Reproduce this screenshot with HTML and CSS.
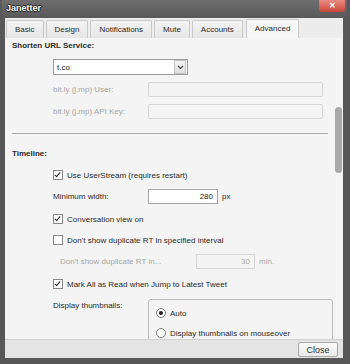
FILE: index.html
```html
<!DOCTYPE html>
<html lang="en">
<head>
    <meta charset="UTF-8">
    <title>Janetter - Settings</title>
    <link rel="stylesheet" href="styles.css">
</head>
<body>
    <div class="window">
        <div class="titlebar">
            <span class="title">Janetter</span>
            <span class="close-x">&#x2715;</span>
        </div>

        <div class="tabs">
            <div class="tab">Basic</div>
            <div class="tab">Design</div>
            <div class="tab">Notifications</div>
            <div class="tab">Mute</div>
            <div class="tab">Accounts</div>
            <div class="tab active">Advanced</div>
        </div>

        <div class="panel">
            <div class="content">
                <div class="section-title">Shorten URL Service:</div>

                <div class="row select-row">
                    <div class="select">
                        <span class="select-value">t.co</span>
                        <span class="select-arrow">
                            <svg width="7" height="5" viewBox="0 0 7 5"><path d="M1 1 L3.5 3.5 L6 1" fill="none" stroke="#444" stroke-width="1.2"/></svg>
                        </span>
                    </div>
                </div>

                <div class="row field-row">
                    <label class="label disabled">bit.ly (j.mp) User:</label>
                    <div class="input wide disabled"></div>
                </div>

                <div class="row field-row">
                    <label class="label disabled">bit.ly (j.mp) API Key:</label>
                    <div class="input wide disabled"></div>
                </div>

                <hr class="divider">

                <div class="section-title timeline">Timeline:</div>

                <div class="row check-row">
                    <span class="checkbox checked"></span>
                    <span>Use UserStream (requires restart)</span>
                </div>

                <div class="row field-row width-row">
                    <label class="label">Minimum width:</label>
                    <div class="input number">280</div>
                    <span class="unit">px</span>
                </div>

                <div class="row check-row gap-7">
                    <span class="checkbox checked"></span>
                    <span>Conversation view on</span>
                </div>

                <div class="row check-row">
                    <span class="checkbox"></span>
                    <span>Don't show duplicate RT in specified interval</span>
                </div>

                <div class="row field-row dup-row">
                    <label class="label disabled dup-label">Don't show duplicate RT in...</label>
                    <div class="input small disabled">30</div>
                    <span class="unit disabled">min.</span>
                </div>

                <div class="row check-row gap-7">
                    <span class="checkbox checked"></span>
                    <span>Mark All as Read when Jump to Latest Tweet</span>
                </div>

                <div class="thumb-row">
                    <label class="label">Display thumbnails:</label>
                    <div class="group">
                        <div class="radio-row">
                            <span class="radio selected"></span>
                            <span>Auto</span>
                        </div>
                        <div class="radio-row">
                            <span class="radio"></span>
                            <span>Display thumbnails on mouseover</span>
                        </div>
                    </div>
                </div>
            </div>
            <div class="scroll-thumb"></div>
        </div>

        <div class="footer">
            <button class="close-button">Close</button>
        </div>
    </div>
</body>
</html>
```

FILE: styles.css
```css
body {
    margin: 0;
    font-family: 'Liberation Sans', Arial, sans-serif;
    font-size: 8px;
    color: #2a2a2a;
}
.window {
    width: 350px;
    height: 364px;
    box-sizing: border-box;
    padding: 0 7px 6px 5px;
    background: #585858;
    display: flex;
    flex-direction: column;
    overflow: hidden;
}
.titlebar {
    height: 18px;
    flex: none;
    display: flex;
    justify-content: space-between;
    align-items: flex-start;
    margin: 0 -4px 0 -3px;
    background: linear-gradient(#6e6e6e, #595959);
}
.title {
    margin: 3px 0 0 4px;
    color: #fff;
    font-size: 9px;
    font-weight: bold;
    text-shadow: 1px 0 0 #222, -1px 0 0 #222, 0 1px 0 #222, 0 -1px 0 #222;
}
.close-x {
    width: 26px;
    height: 12px;
    margin-right: 2px;
    border-radius: 0 0 3px 3px;
    background: linear-gradient(#e98a80, #c9473b);
    color: #fff;
    font-size: 8px;
    font-weight: bold;
    text-align: center;
    line-height: 12px;
}
.tabs {
    height: 20px;
    flex: none;
    display: flex;
    align-items: flex-end;
    gap: 2px;
    padding-left: 1px;
    background: #ececec;
}
.tab {
    height: 17px;
    line-height: 17px;
    padding: 0 8px;
    border: 1px solid #c9c9c9;
    border-bottom: none;
    border-radius: 2px 2px 0 0;
    background: linear-gradient(#f3f3f3, #e6e6e6);
}
.tab.active {
    height: 18px;
    background: #f6f6f6;
    margin-left: 1px;
}
.panel {
    flex: 1;
    position: relative;
    background: #f4f4f4;
    overflow: hidden;
}
.content {
    padding-left: 7px;
}
.section-title {
    font-weight: bold;
    height: 16px;
    line-height: 16px;
}
.row {
    display: flex;
    align-items: center;
    height: 16px;
    margin-left: 41px;
    margin-top: 5px;
}
.select-row {
    margin-top: 5px;
}
.field-row {
    margin-top: 6px;
}
.gap-7 {
    margin-top: 7px;
}
.label {
    width: 95px;
    flex: none;
}
.disabled {
    color: #a6a6a6;
}
.select {
    width: 133px;
    height: 14px;
    display: flex;
    align-items: center;
    justify-content: space-between;
    border: 1px solid #9a9a9a;
    background: #fff;
}
.select-value {
    padding-left: 3px;
    color: #222;
}
.select-arrow {
    width: 10px;
    height: 12px;
    margin-right: 1px;
    display: flex;
    align-items: center;
    justify-content: center;
    border: 1px solid #c4c4c4;
    background: linear-gradient(#f4f4f4, #dedede);
}
.input {
    height: 13px;
    line-height: 13px;
    box-sizing: content-box;
    border: 1px solid #a7a7a7;
    background: #fff;
    text-align: right;
    padding-right: 4px;
    color: #222;
}
.input.disabled {
    border-color: #d6d6d6;
    background: #f4f4f4;
    color: #a6a6a6;
}
.input.wide {
    width: 169px;
    border-radius: 2px;
}
.input.number {
    width: 64px;
}
.input.small {
    width: 53px;
}
.unit {
    margin-left: 4px;
}
.divider {
    margin: 14px 15px 0 0;
    border: none;
    border-top: 1px solid #aaa;
}
.timeline {
    margin-top: 12px;
}
.width-row {
    margin-top: 5px;
}
.dup-row {
    margin-top: 5px;
}
.dup-label {
    width: 136px;
    padding-left: 7px;
}
.check-row span + span {
    margin-left: 4px;
}
.checkbox {
    width: 8px;
    height: 8px;
    flex: none;
    border: 1px solid #8a8a8a;
    background: #fff;
    position: relative;
}
.checkbox.checked::after {
    content: "";
    position: absolute;
    left: 2px;
    top: 0;
    width: 2px;
    height: 5px;
    border: solid #222;
    border-width: 0 1.5px 1.5px 0;
    transform: rotate(40deg);
}
.thumb-row {
    display: flex;
    margin: 7px 0 0 41px;
}
.thumb-row .label {
    line-height: 14px;
}
.group {
    width: 176px;
    height: 60px;
    border: 1px solid #bcbcbc;
    border-radius: 3px;
    padding: 6px 0 0 7px;
}
.radio-row {
    display: flex;
    align-items: center;
    height: 14px;
    gap: 4px;
}
.radio-row + .radio-row {
    margin-top: 6px;
}
.radio {
    width: 8px;
    height: 8px;
    border: 1px solid #7d7d7d;
    border-radius: 50%;
    background: #fff;
    position: relative;
}
.radio.selected::after {
    content: "";
    position: absolute;
    left: 2px;
    top: 2px;
    width: 4px;
    height: 4px;
    border-radius: 50%;
    background: #222;
}
.scroll-thumb {
    position: absolute;
    left: 330px;
    top: 69px;
    width: 7px;
    height: 66px;
    border-radius: 4px;
    background: #a9a9a9;
}
.footer {
    height: 19px;
    flex: none;
    display: flex;
    justify-content: flex-end;
    align-items: flex-start;
    background: #e4e4e4;
    border-top: 1px solid #d0d0d0;
    box-sizing: border-box;
}
.close-button {
    width: 40px;
    height: 15px;
    margin: 2px 5px 0 0;
    padding: 0;
    border: 1px solid #a8a8a8;
    border-radius: 2px;
    background: linear-gradient(#fbfbfb, #e9e9e9);
    font-family: inherit;
    font-size: 9px;
    color: #333;
}
```
